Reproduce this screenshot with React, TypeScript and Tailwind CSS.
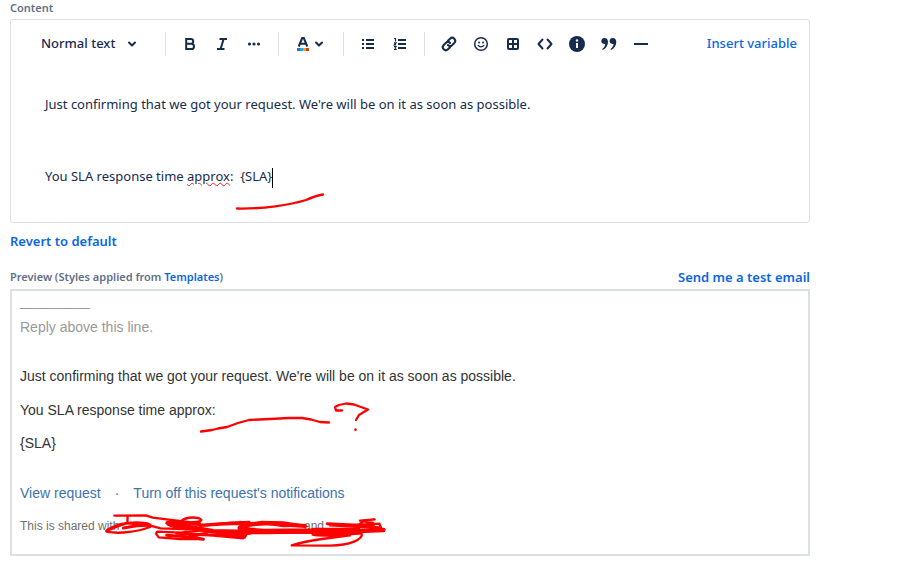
import type { ReactNode } from "react";

type ToolProps = {
    label: string;
    children: ReactNode;
};

const Tool = ({ label, children }: ToolProps) => {
    return (
        <button type="button" aria-label={label} className="flex h-8 w-8 shrink-0 items-center justify-center rounded hover:bg-slate-100">
            <svg width="24" height="24" viewBox="0 0 24 24" fill="none" stroke="currentColor" strokeWidth="2">
                {children}
            </svg>
        </button>
    );
};

const Divider = () => <span className="mx-2 h-6 w-px shrink-0 bg-[#dcdfe4]" />;

const Chevron = () => (
    <svg width="10" height="8" viewBox="0 0 10 8" fill="none" stroke="currentColor" strokeWidth="2" strokeLinecap="round" strokeLinejoin="round">
        <path d="M2 2.5 5 5.5 8 2.5" />
    </svg>
);

const Toolbar = () => {
    return (
        <div className="flex h-12 items-center pr-3 pl-[30px] text-[#172b4d]">
            <button type="button" className="flex w-[116px] shrink-0 items-center gap-3 text-[13px] font-medium">
                Normal text
                <Chevron />
            </button>
            <Divider />
            <Tool label="Bold">
                <path d="M8.2 7h4.6a2.4 2.4 0 0 1 0 4.8H8.2zM8.2 11.8h5.2a2.6 2.6 0 0 1 0 5.2H8.2z" />
            </Tool>
            <Tool label="Italic">
                <path d="M9.5 7H17M7 17h7.5M13.6 7l-3 10" />
            </Tool>
            <Tool label="More formatting">
                <g fill="currentColor" stroke="none">
                    <circle cx="7.5" cy="12" r="1.6" />
                    <circle cx="12" cy="12" r="1.6" />
                    <circle cx="16.5" cy="12" r="1.6" />
                </g>
            </Tool>
            <Divider />
            <button type="button" aria-label="Text color" className="flex h-8 w-12 shrink-0 items-center justify-center gap-0.5 pr-1">
                <svg width="18" height="20" viewBox="0 0 18 20" fill="none">
                    <path d="M4.7 12.5 8.2 4h1.6l3.5 8.5M6 9.8h6" stroke="currentColor" strokeWidth="2" />
                    <path d="M4 14h-.5a.5.5 0 0 0-.5.5v2a.5.5 0 0 0 .5.5H6v-3z" fill="#6554c0" />
                    <path d="M6 14h3v3H6z" fill="#00b8d9" />
                    <path d="M9 14h3v3H9z" fill="#ff991f" />
                    <path d="M12 14h2.5a.5.5 0 0 1 .5.5v2a.5.5 0 0 1-.5.5H12z" fill="#de350b" />
                </svg>
                <Chevron />
            </button>
            <Divider />
            <Tool label="Bullet list">
                <path d="M10 8h8M10 12h8M10 16h8" />
                <path d="M6 8h2M6 12h2M6 16h2" />
            </Tool>
            <Tool label="Numbered list">
                <path d="M10 8h8M10 12h8M10 16h8" />
                <path d="M6 6.5h1.5v3M6 10.8h2l-1.7 2h1.9M6 14.500h2l-1 1.500 1 1.500H6" strokeWidth="1.2" />
            </Tool>
            <Divider />
            <Tool label="Link">
                <g transform="rotate(-45 12 12)" strokeLinecap="round">
                    <path d="M10.5 15H7.5a3 3 0 0 1 0-6h3.2a3 3 0 0 1 2.8 3" />
                    <path d="M13.5 9h3a3 3 0 0 1 0 6h-3.2a3 3 0 0 1-2.8-3" />
                </g>
            </Tool>
            <Tool label="Emoji">
                <circle cx="12" cy="12" r="6.3" strokeWidth="1.5" />
                <path d="M9.2 13.4c1.2 1.9 4.4 1.9 5.6 0" strokeWidth="1.3" strokeLinecap="round" />
                <circle cx="10" cy="10.4" r="1" fill="currentColor" stroke="none" />
                <circle cx="14" cy="10.4" r="1" fill="currentColor" stroke="none" />
            </Tool>
            <Tool label="Table">
                <rect x="7" y="7" width="10" height="10" rx="1" />
                <path d="M12 7v10M7 12h10" />
            </Tool>
            <Tool label="Code snippet">
                <path d="m9.5 7.5-4 4.5 4 4.5M14.5 7.5l4 4.5-4 4.5" strokeLinecap="round" strokeLinejoin="round" />
            </Tool>
            <Tool label="Info panel">
                <circle cx="12" cy="12" r="8" fill="currentColor" stroke="none" />
                <path d="M12 11v5" stroke="white" />
                <circle cx="12" cy="8.5" r="1.2" fill="white" stroke="none" />
            </Tool>
            <Tool label="Quote">
                <g fill="currentColor" stroke="none">
                    <path d="M7.5 6a3 3 0 1 0 .8 5.8c-.2 2.4-1.3 4-3.1 5.3l.5 1c3.2-1.5 5.3-4.4 5.3-8.3C11 7.5 9.6 6 7.5 6z" />
                    <path d="M15.8 6a3 3 0 1 0 .8 5.8c-.2 2.4-1.3 4-3.1 5.3l.5 1c3.2-1.5 5.3-4.4 5.3-8.3C19.3 7.5 17.9 6 15.8 6z" />
                </g>
            </Tool>
            <Tool label="Horizontal rule">
                <path d="M5 12h14" />
            </Tool>
            <button type="button" className="ml-auto text-[13px] font-medium whitespace-nowrap text-[#0c66e4]">
                Insert variable
            </button>
        </div>
    );
};

const Editor = () => {
    return (
        <div className="rounded-[3px] border border-[#dcdfe4] pb-[34px]">
            <Toolbar />
            <div
                role="textbox"
                aria-labelledby="content-label"
                aria-multiline="true"
                contentEditable
                suppressContentEditableWarning
                spellCheck={false}
                className="flex flex-col gap-3 px-[34px] pt-6 text-[13px] leading-6 text-[#172b4d] outline-none"
            >
                <p>Just confirming that we got your request. We're will be on it as soon as possible.</p>
                <p>&nbsp;</p>
                <p>
                    You SLA response time <span className="underline decoration-[#e8262a] decoration-wavy decoration-1">approx</span>:&nbsp; {"{SLA}"}
                    <span className="inline-block h-5 border-l border-black align-middle" />
                </p>
            </div>
        </div>
    );
};

const Preview = () => {
    return (
        <div className="border-2 border-[#dcdfe4] px-2 pt-2 pb-[18px] font-['Liberation_Sans',Arial,sans-serif] text-sm leading-5 text-[#333333]">
            <div className="text-[#999999]">
                <p className="leading-4">—————</p>
                <p className="mt-0.5">Reply above this line.</p>
            </div>
            <p className="mt-[29px]">Just confirming that we got your request. We're will be on it as soon as possible.</p>
            <p className="mt-3.5">You SLA response time approx:</p>
            <p className="mt-[13px]">{"{SLA}"}</p>
            <p className="mt-[30px] flex gap-3.5 text-[#3b73af]">
                <a href="#request">View request</a>
                <span className="text-[#707070]">·</span>
                <a href="#notifications">Turn off this request's notifications</a>
            </p>
            <p className="mt-[13px] flex text-xs leading-5 text-[#707070]">
                <span className="w-[284px]">This is shared with</span>
                <span>and</span>
            </p>
        </div>
    );
};

// Hand-drawn pen marks lying over the page
const PenMarks = () => {
    return (
        <svg
            width="820"
            height="569"
            viewBox="0 0 820 569"
            fill="none"
            stroke="#ff0000"
            strokeWidth="2.3"
            strokeLinecap="round"
            strokeLinejoin="round"
            aria-hidden="true"
            className="pointer-events-none absolute top-0 left-0"
        >
            <path d="M237 208.5C263 209 290 205 306 200Q316 195.5 323 194.5" />
            <path d="M201 431.5 212 430 218 428.5 227 427 238 423 249 420 270 419 289 418 302 418 311 419.5 320 422 329 422.5" />
            <path d="M342 410.5H336L335 407 339 405 346 403.5 354 404.5 361 407 368 409.5 359 415 356 420" />
            <path d="M355.5 429.5v.2" strokeWidth="2.5" />
            <g transform="translate(100 508) scale(.33333)" strokeWidth="7">
                <path d="M43 23 137 22 158 29 200 34 300 46" />
                <path d="M83 25 82 45C50 49 12 66 20 71 60 80 120 69 150 57 162 43 110 42 85 45 55 51 32 65 20 68" />
                <path d="M85 46 148 52 182 61 250 63 300 64" />
                <path d="M70 60 110 53 145 52" strokeWidth="9" />
                <path d="M243 40C260 24 298 27 304 36 300 47 250 43 205 42 185 45 225 60 258 64" />
                <path d="M200 46 265 48 320 52 390 44 448 42" />
                <path d="M208 48 270 58 340 70 450 72" strokeWidth="14" />
                <path d="M300 52 360 48 410 46 450 49" strokeWidth="10" />
                <path d="M310 93 240 93 176 88 168 77 172 71 240 74 300 68" />
                <path d="M200 82 260 86 310 94 270 84 320 76" strokeWidth="9" />
                <path d="M230 76 340 82 430 90 432 82 350 79 450 76" strokeWidth="9" />
            </g>
            <g transform="translate(240 508) scale(.33333)" strokeWidth="7">
                <path d="M0 42 30 48 65 42 130 43 192 53 130 54 80 47 20 54 0 50" />
                <path d="M30 48 90 46 140 50 195 54" strokeWidth="12" />
                <path d="M0 60 30 66 70 70 140 69 230 69" strokeWidth="15" />
                <path d="M0 74 80 75 150 73 220 74" strokeWidth="8" />
                <path d="M0 88 15 88 20 76" />
                <path d="M262 47 340 51 400 50M270 51 340 55 420 59" strokeWidth="9" />
                <path d="M220 66 290 66 355 65 300 74 230 76 320 78 355 69 430 66" strokeWidth="13" />
                <path d="M360 48 372 38 404 34 360 38 400 45 370 52 418 47 424 62 390 59 433 65" />
                <path d="M218 80C250 88 320 78 365 76 370 94 330 112 270 113L155 112C185 102 210 98 245 93L330 82" />
            </g>
        </svg>
    );
};

const App = () => {
    return (
        <main className="relative w-full max-w-[820px] bg-white px-2.5 pb-3 font-['Noto_Sans','Open_Sans',sans-serif]">
            <h2 id="content-label" className="pb-[3px] text-[11px] leading-4 font-semibold text-[#626f86]">Content</h2>
            <Editor />
            <button type="button" className="mt-2 block text-[13px] leading-5 font-semibold text-[#0c66e4]">
                Revert to default
            </button>
            <div className="mt-4 flex items-center justify-between pb-0.5">
                <h2 className="text-[11px] leading-5 font-semibold text-[#626f86]">
                    Preview (Styles applied from <a href="#templates" className="text-[#0c66e4]">Templates</a>)
                </h2>
                <button type="button" className="text-[13px] leading-5 font-semibold text-[#0c66e4]">
                    Send me a test email
                </button>
            </div>
            <Preview />
            <PenMarks />
        </main>
    );
};

export default App;
